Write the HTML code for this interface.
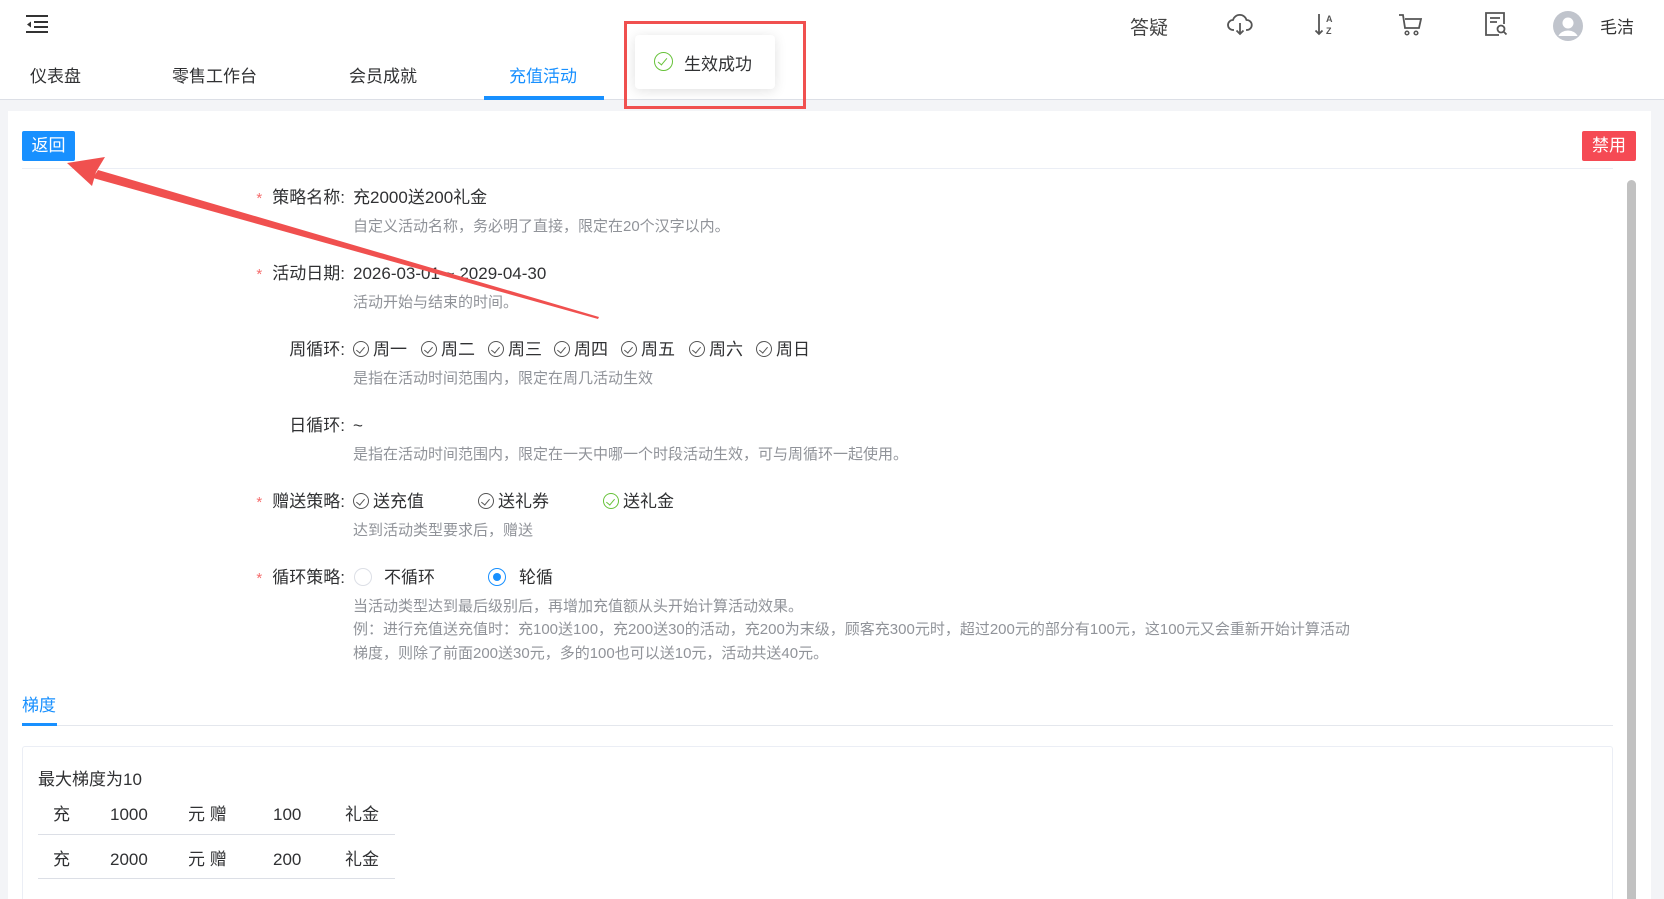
<!DOCTYPE html>
<html><head><meta charset="utf-8">
<style>
*{margin:0;padding:0;box-sizing:border-box}
html{width:1664px;height:899px;overflow:hidden}
body{width:1664px;height:899px;overflow:hidden;background:#f3f4f7;font-family:"Liberation Sans","Noto Sans CJK SC",sans-serif;color:#303133;position:relative}
.a{position:absolute;white-space:nowrap}
.hdr{position:absolute;left:0;top:0;width:1664px;height:51px;background:#fff;box-shadow:0 1px 4px rgba(0,0,0,.06)}
.tabs{position:absolute;left:0;top:51px;width:1664px;height:49px;background:#fff;border-bottom:1px solid #dcdfe6}
.tab{position:absolute;top:11px;font-size:17px;color:#303133}
.panel{position:absolute;left:8px;top:111px;width:1643px;height:788px;background:#fff}
.lbl{position:absolute;font-size:17px;color:#303133;text-align:right;width:200px;left:145px;line-height:20px}
.lbl i{color:#f56c6c;font-style:normal;font-size:15px;margin-right:10px}
.val{position:absolute;left:353px;font-size:17px;line-height:20px;color:#303133}
.hint{position:absolute;left:353px;font-size:15px;color:#909399;line-height:18px}
.ck{display:inline-block;width:16px;height:16px;border:1.3px solid #555;border-radius:50%;vertical-align:-2px;position:relative;margin-right:4px}
.ck:after{content:"";position:absolute;left:4px;top:2.5px;width:4px;height:7px;border:solid #555;border-width:0 1.3px 1.3px 0;transform:rotate(40deg)}
.ck.g{border-color:#67c23a}.ck.g:after{border-color:#67c23a}
.td{position:absolute;font-size:17px;color:#303133;line-height:22px}
</style></head><body>
<div class="hdr">
 <svg class="a" style="left:25px;top:14px" width="24" height="20" viewBox="0 0 24 20"><path d="M1 2h22M9 8h14M9 13h14M1 18h22" stroke="#333" stroke-width="2"/><path d="M6 7.5v6l-4-3z" fill="#333"/></svg>
 <div class="a" style="left:1130px;top:13px;font-size:19px;color:#444">答疑</div>
 <svg class="a" style="left:1227px;top:13px" width="26" height="24" viewBox="0 0 26 24"><path d="M7 17H6a5 5 0 0 1 0-10 7 7 0 0 1 13.5 0A4.5 4.5 0 0 1 20 17h-1" fill="none" stroke="#555" stroke-width="1.8"/><path d="M13 10v11M9.5 17.5l3.5 3.5 3.5-3.5" fill="none" stroke="#555" stroke-width="1.8"/></svg>
 <svg class="a" style="left:1314px;top:12px" width="24" height="26" viewBox="0 0 24 26"><path d="M5 2v20M1.5 18.5 5 22l3.5-3.5" fill="none" stroke="#555" stroke-width="1.8"/><text x="12" y="10" font-size="9" font-family="Liberation Sans" font-weight="bold" fill="#555">A</text><text x="12" y="22" font-size="9" font-family="Liberation Sans" font-weight="bold" fill="#555">Z</text></svg>
 <svg class="a" style="left:1398px;top:13px" width="26" height="24" viewBox="0 0 26 24"><path d="M1 2h4l2 13h14l2-9H7" fill="none" stroke="#555" stroke-width="1.8"/><circle cx="9" cy="20" r="1.8" fill="none" stroke="#555" stroke-width="1.5"/><circle cx="18" cy="20" r="1.8" fill="none" stroke="#555" stroke-width="1.5"/></svg>
 <svg class="a" style="left:1484px;top:11px" width="24" height="26" viewBox="0 0 24 26"><path d="M15 24H2V2h18v11" fill="none" stroke="#555" stroke-width="1.8"/><path d="M6 7h10M6 11h7" stroke="#555" stroke-width="1.8"/><circle cx="17" cy="18" r="3.5" fill="none" stroke="#555" stroke-width="1.8"/><path d="M19.5 20.5 22.5 23.5" stroke="#555" stroke-width="1.8"/></svg>
 <svg class="a" style="left:1553px;top:11px" width="30" height="30" viewBox="0 0 30 30"><circle cx="15" cy="15" r="15" fill="#c0c4cc"/><circle cx="15" cy="12" r="5.5" fill="#fff"/><path d="M5.5 25a10 8 0 0 1 19 0z" fill="#fff"/></svg>
 <div class="a" style="left:1600px;top:13px;font-size:17px;color:#333">毛洁</div>
</div>
<div class="tabs">
 <div class="tab" style="left:30px">仪表盘</div>
 <div class="tab" style="left:172px">零售工作台</div>
 <div class="tab" style="left:349px">会员成就</div>
 <div class="tab" style="left:509px;color:#1890ff">充值活动</div>
 <div class="a" style="left:484px;top:45px;width:120px;height:4px;background:#1890ff"></div>
</div>
<div class="panel"></div>
<div class="a" style="left:22px;top:131px;width:53px;height:30px;background:#1890ff;border-radius:2px;color:#fff;font-size:17px;text-align:center;line-height:30px">返回</div>
<div class="a" style="left:1582px;top:131px;width:54px;height:30px;background:#f54a54;border-radius:2px;color:#fff;font-size:17px;text-align:center;line-height:30px">禁用</div>
<div class="a" style="left:22px;top:168px;width:1591px;height:1px;background:#ebeef5"></div>
<div class="a" style="left:1627px;top:180px;width:9px;height:719px;background:#c1c1c1;border-radius:5px 5px 0 0"></div>

<div class="lbl" style="top:188px"><i>*</i>策略名称:</div><div class="val" style="top:188px">充2000送200礼金</div>
<div class="hint" style="top:218px">自定义活动名称，务必明了直接，限定在20个汉字以内。</div>
<div class="lbl" style="top:264px"><i>*</i>活动日期:</div><div class="val" style="top:264px">2026-03-01 ~ 2029-04-30</div>
<div class="hint" style="top:294px">活动开始与结束的时间。</div>
<div class="lbl" style="top:340px">周循环:</div>
<div class="val" style="top:340px;left:353px"><span class="ck"></span>周一</div>
<div class="val" style="top:340px;left:421px"><span class="ck"></span>周二</div>
<div class="val" style="top:340px;left:488px"><span class="ck"></span>周三</div>
<div class="val" style="top:340px;left:554px"><span class="ck"></span>周四</div>
<div class="val" style="top:340px;left:621px"><span class="ck"></span>周五</div>
<div class="val" style="top:340px;left:689px"><span class="ck"></span>周六</div>
<div class="val" style="top:340px;left:756px"><span class="ck"></span>周日</div>
<div class="hint" style="top:370px">是指在活动时间范围内，限定在周几活动生效</div>
<div class="lbl" style="top:416px">日循环:</div><div class="val" style="top:416px">~</div>
<div class="hint" style="top:446px">是指在活动时间范围内，限定在一天中哪一个时段活动生效，可与周循环一起使用。</div>
<div class="lbl" style="top:492px"><i>*</i>赠送策略:</div>
<div class="val" style="top:492px;left:353px"><span class="ck"></span>送充值</div>
<div class="val" style="top:492px;left:478px"><span class="ck"></span>送礼券</div>
<div class="val" style="top:492px;left:603px"><span class="ck g"></span>送礼金</div>
<div class="hint" style="top:522px">达到活动类型要求后，赠送</div>
<div class="lbl" style="top:568px"><i>*</i>循环策略:</div>
<div class="a" style="left:354px;top:568px;width:18px;height:18px;border:1px solid #dcdfe6;border-radius:50%"></div>
<div class="val" style="top:568px;left:384px">不循环</div>
<div class="a" style="left:488px;top:568px;width:18px;height:18px;border:1.5px solid #1890ff;border-radius:50%"><div style="margin:3.5px;width:8px;height:8px;border-radius:50%;background:#1890ff"></div></div>
<div class="val" style="top:568px;left:519px">轮循</div>
<div class="hint" style="top:598px">当活动类型达到最后级别后，再增加充值额从头开始计算活动效果。</div>
<div class="hint" style="top:621px">例：进行充值送充值时：充100送100，充200送30的活动，充200为末级，顾客充300元时，超过200元的部分有100元，这100元又会重新开始计算活动</div>
<div class="hint" style="top:645px">梯度，则除了前面200送30元，多的100也可以送10元，活动共送40元。</div>

<div class="a" style="left:22px;top:691px;font-size:17px;color:#1890ff">梯度</div>
<div class="a" style="left:22px;top:725px;width:1591px;height:1px;background:#e4e7ed"></div>
<div class="a" style="left:22px;top:723px;width:35px;height:3px;background:#1890ff"></div>
<div class="a" style="left:22px;top:746px;width:1591px;height:153px;border:1px solid #ebeef5;border-bottom:none;border-radius:3px 3px 0 0"></div>
<div class="a" style="left:38px;top:765px;font-size:17px">最大梯度为10</div>
<div class="td" style="left:53px;top:804px">充</div><div class="td" style="left:110px;top:804px">1000</div><div class="td" style="left:188px;top:804px">元 赠</div><div class="td" style="left:273px;top:804px">100</div><div class="td" style="left:345px;top:804px">礼金</div>
<div class="a" style="left:38px;top:834px;width:357px;height:1px;background:#dcdfe6"></div>
<div class="td" style="left:53px;top:849px">充</div><div class="td" style="left:110px;top:849px">2000</div><div class="td" style="left:188px;top:849px">元 赠</div><div class="td" style="left:273px;top:849px">200</div><div class="td" style="left:345px;top:849px">礼金</div>
<div class="a" style="left:38px;top:878px;width:357px;height:1px;background:#dcdfe6"></div>

<svg class="a" style="left:0;top:0" width="1664" height="899">
 <polygon points="98,170 599,317 598,319 93,178" fill="#f0504f"/>
 <polygon points="67,163 105,157 96,172 92,186" fill="#f0504f"/>
</svg>
<div class="a" style="left:624px;top:21px;width:182px;height:88px;border:3px solid #f0504f"></div>
<div class="a" style="left:635px;top:35px;width:140px;height:54px;background:#fff;border-radius:4px;box-shadow:0 2px 12px rgba(0,0,0,.12)"></div>
<div class="a" style="left:654px;top:52px;width:19px;height:19px;border:1.5px solid #67c23a;border-radius:50%"><div style="position:absolute;left:5px;top:2.5px;width:5px;height:9px;border:solid #67c23a;border-width:0 1.5px 1.5px 0;transform:rotate(40deg)"></div></div>
<div class="a" style="left:684px;top:50px;font-size:17px;color:#303133">生效成功</div>
</body></html>
